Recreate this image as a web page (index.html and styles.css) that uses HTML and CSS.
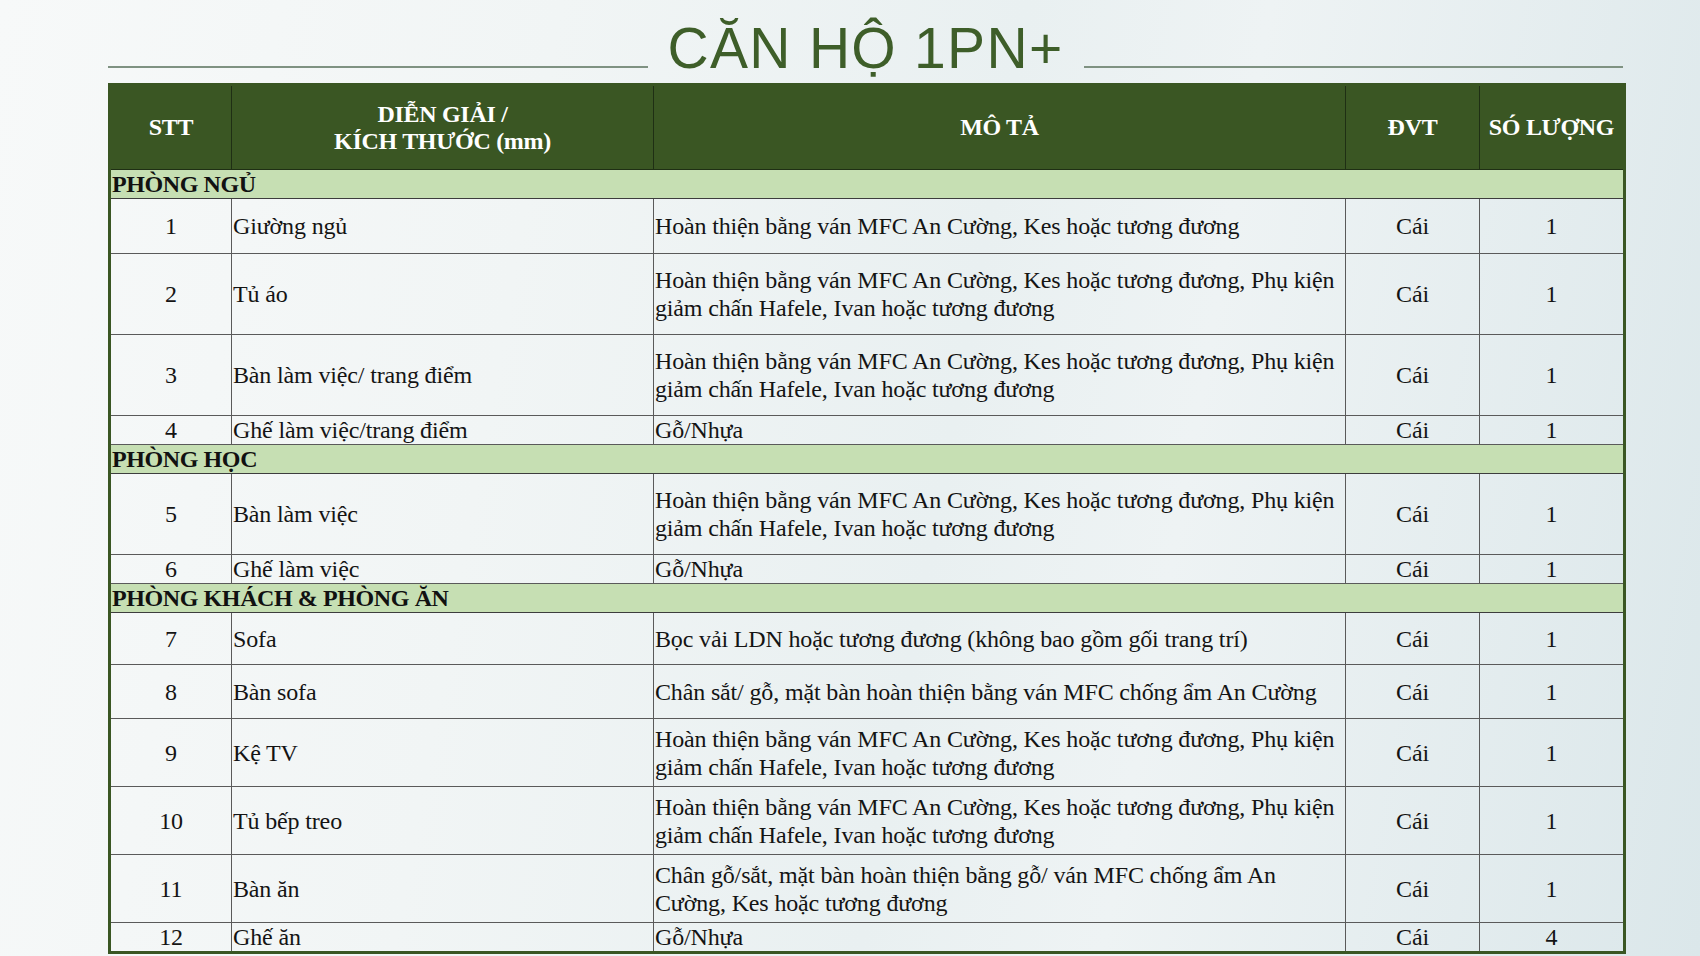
FILE: index.html
```html
<!DOCTYPE html>
<html lang="vi">
<head>
<meta charset="utf-8">
<title>CĂN HỘ 1PN+</title>
<link rel="stylesheet" href="styles.css">
</head>
<body>
<div class="page">
  <div class="title-row">
    <div class="rule"></div>
    <h1 class="title">CĂN HỘ 1PN+</h1>
    <div class="rule"></div>
  </div>
  <table class="spec">
    <colgroup>
      <col class="c-stt">
      <col class="c-name">
      <col class="c-desc">
      <col class="c-unit">
      <col class="c-qty">
    </colgroup>
    <thead>
      <tr class="head">
        <th>STT</th>
        <th>DIỄN GIẢI /<br>KÍCH THƯỚC (mm)</th>
        <th>MÔ TẢ</th>
        <th>ĐVT</th>
        <th>SÓ LƯỢNG</th>
      </tr>
    </thead>
    <tbody>
      <tr class="section"><td colspan="5">PHÒNG NGỦ</td></tr>
      <tr class="h55"><td class="ctr">1</td><td>Giường ngủ</td><td>Hoàn thiện bằng ván MFC An Cường, Kes hoặc tương đương</td><td class="ctr">Cái</td><td class="ctr">1</td></tr>
      <tr class="h81"><td class="ctr">2</td><td>Tủ áo</td><td>Hoàn thiện bằng ván MFC An Cường, Kes hoặc tương đương, Phụ kiện giảm chấn Hafele, Ivan hoặc tương đương</td><td class="ctr">Cái</td><td class="ctr">1</td></tr>
      <tr class="h81"><td class="ctr">3</td><td>Bàn làm việc/ trang điểm</td><td>Hoàn thiện bằng ván MFC An Cường, Kes hoặc tương đương, Phụ kiện giảm chấn Hafele, Ivan hoặc tương đương</td><td class="ctr">Cái</td><td class="ctr">1</td></tr>
      <tr class="h29"><td class="ctr">4</td><td>Ghế làm việc/trang điểm</td><td>Gỗ/Nhựa</td><td class="ctr">Cái</td><td class="ctr">1</td></tr>
      <tr class="section"><td colspan="5">PHÒNG HỌC</td></tr>
      <tr class="h81"><td class="ctr">5</td><td>Bàn làm việc</td><td>Hoàn thiện bằng ván MFC An Cường, Kes hoặc tương đương, Phụ kiện giảm chấn Hafele, Ivan hoặc tương đương</td><td class="ctr">Cái</td><td class="ctr">1</td></tr>
      <tr class="h29"><td class="ctr">6</td><td>Ghế làm việc</td><td>Gỗ/Nhựa</td><td class="ctr">Cái</td><td class="ctr">1</td></tr>
      <tr class="section"><td colspan="5">PHÒNG KHÁCH &amp; PHÒNG ĂN</td></tr>
      <tr class="h52"><td class="ctr">7</td><td>Sofa</td><td>Bọc vải LDN hoặc tương đương (không bao gồm gối trang trí)</td><td class="ctr">Cái</td><td class="ctr">1</td></tr>
      <tr class="h54"><td class="ctr">8</td><td>Bàn sofa</td><td>Chân sắt/ gỗ, mặt bàn hoàn thiện bằng ván MFC chống ẩm An Cường</td><td class="ctr">Cái</td><td class="ctr">1</td></tr>
      <tr class="h68"><td class="ctr">9</td><td>Kệ TV</td><td>Hoàn thiện bằng ván MFC An Cường, Kes hoặc tương đương, Phụ kiện giảm chấn Hafele, Ivan hoặc tương đương</td><td class="ctr">Cái</td><td class="ctr">1</td></tr>
      <tr class="h68"><td class="ctr">10</td><td>Tủ bếp treo</td><td>Hoàn thiện bằng ván MFC An Cường, Kes hoặc tương đương, Phụ kiện giảm chấn Hafele, Ivan hoặc tương đương</td><td class="ctr">Cái</td><td class="ctr">1</td></tr>
      <tr class="h68"><td class="ctr">11</td><td>Bàn ăn</td><td>Chân gỗ/sắt, mặt bàn hoàn thiện bằng gỗ/ ván MFC chống ẩm An Cường, Kes hoặc tương đương</td><td class="ctr">Cái</td><td class="ctr">1</td></tr>
      <tr class="h30"><td class="ctr">12</td><td>Ghế ăn</td><td>Gỗ/Nhựa</td><td class="ctr">Cái</td><td class="ctr">4</td></tr>
    </tbody>
  </table>
</div>
</body>
</html>
```

FILE: styles.css
```css
html, body {
  margin: 0;
  padding: 0;
}
body {
  width: 1700px;
  height: 956px;
  overflow: hidden;
  background: linear-gradient(100deg, #f7f9f9 0%, #f1f5f5 30%, #e9f0f1 55%, #eef3f4 68%, #dbe7ea 100%);
  font-family: "Liberation Serif", "Times New Roman", serif;
  color: #141414;
}
.page {
  padding: 0 77px 0 108px;
}
.title-row {
  display: flex;
  align-items: flex-start;
  gap: 20px;
  height: 83px;
}
.rule {
  flex: 1;
  height: 2px;
  margin-top: 66px;
  background: #7f9282;
}
.title {
  margin: 20px 0 0 0;
  font-family: "Liberation Sans", Arial, sans-serif;
  font-weight: normal;
  font-size: 57px;
  line-height: 57px;
  letter-spacing: 1.3px;
  color: #3e5e29;
  white-space: nowrap;
}
.spec {
  width: 1515px;
  table-layout: fixed;
  border-collapse: collapse;
  border: 3px solid #3a5623;
  font-size: 24px;
  line-height: 28px;
  letter-spacing: -0.15px;
}
.c-stt { width: 122px; }
.c-name { width: 422px; }
.c-desc { width: 692px; }
.c-unit { width: 134px; }
.c-qty { width: 145px; }

.head {
  height: 85px;
  background: #3a5623;
}
.head th {
  color: #ffffff;
  font-weight: bold;
  font-size: 24px;
  line-height: 27px;
  letter-spacing: -0.3px;
  text-align: center;
  vertical-align: middle;
  border: 1px solid #1f2f14;
  padding: 0;
}
.spec td {
  border: 1px solid #5a5a5a;
  padding: 0 6px 0 1px;
  vertical-align: middle;
  white-space: normal;
}
.spec td.ctr {
  text-align: center;
  padding: 0;
}
.section {
  height: 29px;
  background: #c6dfb3;
}
.section td {
  font-weight: bold;
  letter-spacing: -0.4px;
  padding: 0 0 0 1px;
  border-top: 1px solid #3d3d3d;
  border-bottom: 1px solid #3d3d3d;
  color: #111;
}
.h29 { height: 29px; }
.h30 { height: 30px; }
.h52 { height: 52px; }
.h54 { height: 54px; }
.h55 { height: 55px; }
.h68 { height: 68px; }
.h81 { height: 81px; }
```
